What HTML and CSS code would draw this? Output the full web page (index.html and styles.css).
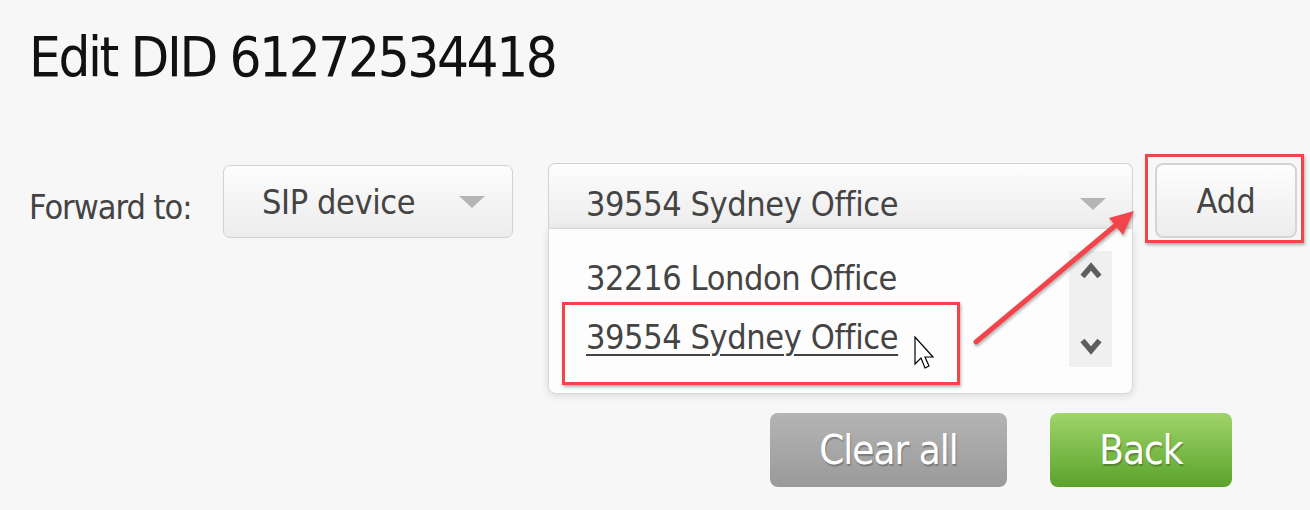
FILE: index.html
```html
<!DOCTYPE html>
<html lang="en">
<head>
  <meta charset="UTF-8" />
  <title>Edit DID 61272534418</title>
  <link rel="stylesheet" href="styles.css">
</head>
<body>

  <main class="page">
    <h1 class="title">Edit DID 61272534418</h1>

    <div class="forward-row">
      <span class="field-label">Forward to:</span>

      <div class="select select-type">
        <span>SIP device</span>
        <span class="caret"></span>
      </div>

      <div class="select-wrap">
        <div class="select select-target">
          <span>39554 Sydney Office</span>
          <span class="caret"></span>
        </div>

        <div class="dropdown">
          <ul class="options">
            <li>32216 London Office</li>
            <li class="is-hover"><span class="opt-text">39554 Sydney Office</span>
              <svg class="cursor" width="22" height="40" viewBox="0 0 22 40">
                <path d="M1 1 L1 28 L7 22 L11 32 L15 30 L11 21 L19 21 Z" fill="#fff" stroke="#000" stroke-width="1.2" stroke-linejoin="miter"/>
              </svg>
            </li>
          </ul>
          <div class="scroller">
            <svg width="22" height="18" viewBox="0 0 22 18"><path d="M2.5 15.5 L11 5.5 L19.5 15.5" fill="none" stroke="#5e5e5e" stroke-width="5.5"/></svg>
            <svg width="22" height="18" viewBox="0 0 22 18"><path d="M2.5 2.5 L11 12.5 L19.5 2.5" fill="none" stroke="#5e5e5e" stroke-width="5.5"/></svg>
          </div>
          <span class="hl-box"></span>
        </div>
      </div>

      <div class="add-wrap">
        <button class="btn-add">Add</button>
      </div>
    </div>

    <div class="actions">
      <button class="btn btn-clear">Clear all</button>
      <button class="btn btn-back">Back</button>
    </div>
  </main>

  <!-- callout arrow from the hovered option to the Add button -->
  <svg class="callout" width="1310" height="510" viewBox="0 0 1310 510">
    <defs>
      <filter id="drop" x="-20%" y="-20%" width="140%" height="140%">
        <feDropShadow dx="1" dy="2" stdDeviation="1.5" flood-color="#000" flood-opacity="0.3"/>
      </filter>
    </defs>
    <g filter="url(#drop)">
      <line x1="976" y1="342" x2="1116" y2="225" stroke="#f2454b" stroke-width="5" stroke-linecap="round"/>
      <polygon points="1134,211 1109,218 1123,235" fill="#f2454b"/>
    </g>
  </svg>

</body>
</html>
```

FILE: styles.css
```css
body {
  margin: 0;
  background: #f7f7f7;
  font-family: "Liberation Sans Narrow", "DejaVu Sans Condensed", "DejaVu Sans", sans-serif;
  font-stretch: condensed;
  color: #444;
}

.page {
  padding: 0 29px;
}

.title {
  margin: 0;
  padding-top: 23px;
  font-size: 56px;
  font-weight: normal;
  letter-spacing: -2.4px;
  line-height: 68px;
  color: #111;
}

.forward-row {
  display: flex;
  align-items: flex-start;
  margin-top: 72px;
}

.forward-row > * {
  flex-shrink: 0;
}

.field-label {
  font-size: 34px;
  line-height: 40px;
  letter-spacing: -1px;
  margin-top: 24px;
  width: 194px;
}

.select {
  display: flex;
  align-items: center;
  justify-content: space-between;
  box-sizing: border-box;
  border: 1px solid #d2d2d2;
  border-radius: 7px;
  background: linear-gradient(#fdfdfd, #ececec);
  font-size: 34px;
  letter-spacing: -0.4px;
  color: #444;
}

.caret {
  width: 0;
  height: 0;
  border-left: 13px solid transparent;
  border-right: 13px solid transparent;
  border-top: 12px solid #b5b5b5;
}

.select-type {
  width: 290px;
  height: 73px;
  margin-top: 2px;
  padding: 0 27px 0 38px;
}

.select-wrap {
  position: relative;
  margin-left: 35px;
}

.select-target {
  width: 585px;
  height: 66px;
  padding: 14px 26px 0 37px;
  border-bottom: none;
  border-radius: 7px 7px 0 0;
}

.dropdown {
  position: absolute;
  left: 0;
  top: 65px;
  width: 585px;
  height: 166px;
  box-sizing: border-box;
  background: #fdfdfd;
  border: 1px solid #d8d8d8;
  border-radius: 0 0 8px 8px;
  box-shadow: 0 2px 8px rgba(0, 0, 0, 0.12);
  display: flex;
  justify-content: space-between;
}

.options {
  list-style: none;
  margin: 0;
  padding: 20px 0 0 37px;
  font-size: 34px;
  letter-spacing: -0.4px;
  line-height: 59px;
}

.options li {
  position: relative;
}

.options .opt-text {
  text-decoration: underline;
  text-decoration-thickness: 2px;
  text-underline-offset: 5px;
}

.cursor {
  position: absolute;
  left: 328px;
  top: 28px;
}

.scroller {
  display: flex;
  flex-direction: column;
  justify-content: space-between;
  align-items: center;
  width: 43px;
  height: 116px;
  margin: 22px 20px 0 0;
  padding: 10px 0 11px;
  box-sizing: border-box;
  background: #f0f0f0;
}

.hl-box {
  position: absolute;
  left: 13px;
  top: 73px;
  width: 398px;
  height: 83px;
  box-sizing: border-box;
  border: 3px solid #f2454b;
  box-shadow: 1px 2px 3px rgba(0, 0, 0, 0.3);
}

.add-wrap {
  position: relative;
  margin-left: 22px;
}

.add-wrap::after {
  content: "";
  position: absolute;
  left: -10px;
  top: -9px;
  right: -7px;
  bottom: -5px;
  border: 3px solid #f2454b;
  box-shadow: 1px 2px 3px rgba(0, 0, 0, 0.3);
}

.btn-add {
  width: 142px;
  height: 75px;
  border: 2px solid #d4d4d4;
  border-radius: 8px;
  background: linear-gradient(#fefefe, #ececec);
  font-family: inherit;
  font-stretch: condensed;
  font-size: 34px;
  color: #444;
}

.actions {
  display: flex;
  justify-content: flex-end;
  gap: 43px;
  margin-top: 175px;
  padding-right: 49px;
}

.btn {
  height: 74px;
  border: none;
  border-radius: 8px;
  font-family: inherit;
  font-stretch: condensed;
  font-size: 40px;
  letter-spacing: -1px;
  color: #fff;
  text-shadow: 1px 2px 1px rgba(0, 0, 0, 0.25);
}

.btn-clear {
  width: 237px;
  background: linear-gradient(#b4b4b4, #9a9a9a);
}

.btn-back {
  width: 182px;
  background: linear-gradient(#9fd46a, #5aa32b);
}

.callout {
  position: absolute;
  left: 0;
  top: 0;
  pointer-events: none;
}
```
